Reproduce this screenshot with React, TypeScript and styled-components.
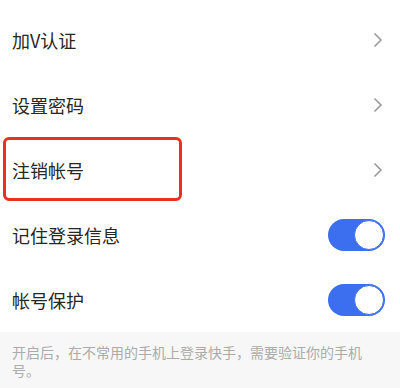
import React from 'react';
import styled, { createGlobalStyle } from 'styled-components';

const GlobalStyle = createGlobalStyle`
    html, body {
        margin: 0;
        padding: 0;
        background: #ffffff;
    }
    body {
        font-family: "Noto Sans CJK SC", "Noto Sans", sans-serif;
    }
`;

const Page = styled.div`
    width: 400px;
    height: 388px;
    overflow: hidden;
    background: #ffffff;
    padding-top: 7px;
    box-sizing: border-box;
`;

const Row = styled.div`
    position: relative;
    height: 65px;
    display: flex;
    align-items: center;
    justify-content: space-between;
    padding: 0 15px 0 12px;
    box-sizing: border-box;
`;

const Label = styled.span`
    font-size: 18px;
    color: #262626;
    line-height: 1;
`;

const Highlight = styled.div`
    position: absolute;
    left: 3px;
    top: 0;
    width: 179px;
    height: 64px;
    border: 3px solid #e8321f;
    border-radius: 6px;
    box-sizing: border-box;
    pointer-events: none;
`;

const Chevron = styled.svg`
    width: 10px;
    height: 16px;
    margin-right: 2px;
`;

const Toggle = styled.div<{ on: boolean }>`
    position: relative;
    width: 57px;
    height: 32px;
    border-radius: 16px;
    background: ${p => (p.on ? '#3b6ff0' : '#e5e5e5')};
`;

const Knob = styled.div<{ on: boolean }>`
    position: absolute;
    top: 1px;
    left: ${p => (p.on ? '26px' : '1px')};
    width: 30px;
    height: 30px;
    border-radius: 50%;
    background: #ffffff;
    box-sizing: border-box;
    border: 1px solid ${p => (p.on ? '#3b6ff0' : '#dddddd')};
`;

const Note = styled.div`
    background: #f7f7f7;
    padding: 11px 30px 20px 12px;
    font-size: 14px;
    line-height: 18px;
    color: #ababab;
    line-break: anywhere;
`;

type TRow = {
    label: string;
    kind: 'link' | 'switch';
    highlighted?: boolean;
};

const rows: TRow[] = [
    { label: '加V认证', kind: 'link' },
    { label: '设置密码', kind: 'link' },
    { label: '注销帐号', kind: 'link', highlighted: true },
    { label: '记住登录信息', kind: 'switch' },
    { label: '帐号保护', kind: 'switch' },
];

const ArrowIcon = () => (
    <Chevron viewBox='0 0 10 16'>
        <path d='M1.5 1.5 L8 8 L1.5 14.5' fill='none' stroke='#9a9a9a' strokeWidth='1.6' />
    </Chevron>
);

const App = () => (
    <Page>
        <GlobalStyle />
        {rows.map(row => (
            <Row key={row.label}>
                <Label>{row.label}</Label>
                {row.kind === 'link' ? (
                    <ArrowIcon />
                ) : (
                    <Toggle on>
                        <Knob on />
                    </Toggle>
                )}
                {row.highlighted && <Highlight />}
            </Row>
        ))}
        <Note>开启后，在不常用的手机上登录快手，需要验证你的手机号。</Note>
    </Page>
);

export default App;
